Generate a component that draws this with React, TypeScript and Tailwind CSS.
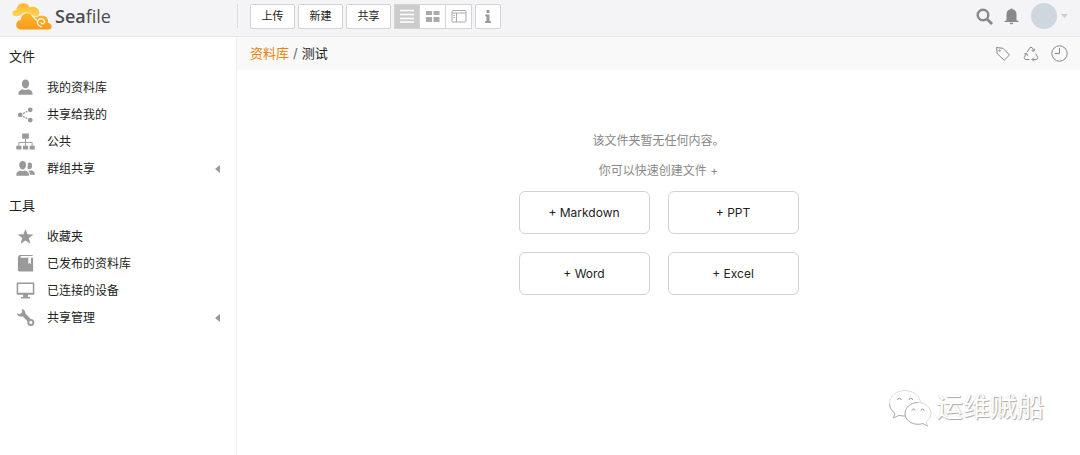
import { useState } from "react"
import type { ReactNode } from "react"
import clsx from "clsx"

interface SideItem {
  label: string
  icon: ReactNode
  expandable?: boolean
}

const fileItems: SideItem[] = [
  {
    label: '我的资料库',
    icon: (
      <>
        <path d="M10 1.500c2.500 0 3.800 1.800 3.800 4.500S12.200 11 10 11 6.200 8.700 6.200 6 7.500 1.500 10 1.500z" />
        <path d="M2.500 17.500c0-3.700 1.500-4.700 4.700-5.600 1.600 1.100 4 1.100 5.600 0 3.200.9 4.700 1.900 4.700 5.600z" />
      </>
    ),
  },
  {
    label: '共享给我的',
    icon: (
      <>
        <circle cx="4.500" cy="10.500" r="2.500" />
        <circle cx="15" cy="5" r="2.500" />
        <circle cx="15" cy="15.800" r="2.500" />
        <path d="M7.500 9l5-2.600M7.500 12l5 2.600" fill="none" stroke="currentColor" strokeWidth="1.400" strokeDasharray="2 1" />
      </>
    ),
  },
  {
    label: '公共',
    icon: (
      <>
        <path d="M6.500 1.500h7v5.500h-7zM.3 14.500h5.400v4H.3zM7.300 14.500h5.400v4H7.300zM14.300 14.500h5.400v4h-5.400z" />
        <path d="M10 7.500v7M3 14.500V11h14v3.500" fill="none" stroke="currentColor" />
      </>
    ),
  },
  {
    label: '群组共享',
    expandable: true,
    icon: (
      <>
        <path d="M7 2c2.300 0 3.600 1.700 3.600 4.200S9 11 7 11 3.400 8.700 3.400 6.200 4.700 2 7 2z" />
        <path d="M.3 17.500c0-3.500 1.500-4.500 4.400-5.300 1.400.9 3.300.9 4.700 0 2.900.8 4.300 1.800 4.300 5.300z" />
        <path d="M14.200 3.800c1.800 0 2.800 1.300 2.800 3.300s-1.200 3.800-2.800 3.800c-1 0-1.800-.5-2.300-1.400.6-1.300.7-3 .3-4.600.4-.7 1.100-1.100 2-1.100z" />
        <path d="M12.600 12c.9.500 2.300.5 3.300-.2 2.700.7 4 1.900 4 4.900h-5.100c-.2-2.300-.9-3.700-2.200-4.700z" />
      </>
    ),
  },
]

const toolItems: SideItem[] = [
  {
    label: '收藏夹',
    icon: <path d="M10 2l2.100 5.700 6.300.2-5 3.700 1.800 6-5.200-3.500-5.200 3.500 1.800-6-5-3.700 6.300-.2z" />,
  },
  {
    label: '已发布的资料库',
    icon: (
      <>
        <path d="M4.500 1H17.500v1H5.500c-1 0-1 1.900 0 1.900h12.500v14.600H4c-1.300 0-2-.6-2-1.800V4C2 2.200 3 1 4.500 1z" />
        <path d="M13 3.900h2.700v6.800l-1.400-1.400L13 10.700z" fill="white" />
      </>
    ),
  },
  {
    label: '已连接的设备',
    icon: (
      <path fillRule="evenodd" d="M1.500 1.500h17c.5 0 .8.300.8.800v11.500c0 .5-.3.800-.8.800h-6v2.200h2.300v1.600H5.200v-1.600h2.300v-2.200h-6c-.5 0-.8-.3-.8-.8V2.300c0-.5.300-.8.8-.8zm.8 1.600v9.300h15.400V3.100z" />
    ),
  },
  {
    label: '共享管理',
    expandable: true,
    icon: (
      <>
        <path d="M5.800 1.200c2.700 0 4.400 2 4.100 4.600l5.400 5.600-3 2.800-5.400-5.400c-2.700.8-5.600-.7-6-3.600l3.200 1.300 2.500-2.200z" />
        <circle cx="15.600" cy="15.200" r="2.700" fill="none" stroke="currentColor" strokeWidth="2" />
      </>
    ),
  },
]

const fileTypes = ['Markdown', 'PPT', 'Word', 'Excel']

const viewModes = [
  {
    id: 'list',
    label: '列表',
    icon: <path d="M1 2.500h14M1 6.500h14M1 10.500h14M1 14h14" stroke="currentColor" strokeWidth="1.300" />,
  },
  {
    id: 'grid',
    label: '网格',
    icon: <path d="M1 3h6v4H1zM8.500 3h6v4h-6zM1 9h6v5H1zM8.500 9h6v5h-6z" fill="currentColor" />,
  },
  {
    id: 'column',
    label: '分栏',
    icon: (
      <>
        <rect x="1" y="2.500" width="14" height="11.500" rx="1" stroke="currentColor" />
        <path d="M1 5h14M5.500 5v9M2.500 7.500h1.500M2.500 9.500h1.500" stroke="currentColor" />
      </>
    ),
  },
]

function Logo() {
  return (
    <a href="#" className="flex items-center gap-[2px] text-[#4d4d4d]" aria-label="Seafile">
      <svg width="41" height="28" viewBox="0 0 41 28" aria-hidden="true">
        <defs>
          <linearGradient id="cloudTop" x1="0" y1="0" x2="0" y2="1">
            <stop offset="0" stopColor="#ffb62c" />
            <stop offset="1" stopColor="#ffd65a" />
          </linearGradient>
          <linearGradient id="cloudBottom" x1="0" y1="0" x2="0" y2="1">
            <stop offset="0" stopColor="#fdb62b" />
            <stop offset="1" stopColor="#fb991c" />
          </linearGradient>
        </defs>
        <path d="M1 13.500C-.8 10 1.200 8 4.500 8.300 4.500 3.500 8 .8 12 1.200c3 .3 4.800 2 5.400 4.100C22.500 3.500 27.500 6.500 27.300 11c-.1 1.500-.5 2.700-1.300 3.700l-6-1.500c-2.300-3.600-8.500-3.900-11-.2-2.500 1.200-5.500 1.600-8 .5z" fill="url(#cloudTop)" />
        <path d="M9.500 27.500c-6.800 0-7-9-.8-9.500.3-4.900 3.800-7.600 7.800-6.700 2.300.5 3.800 1.800 4.700 3.600 1.200-.3 2.600-.1 3.800.8 1.600-2 5-2.800 7.800-1.400 2.600 1.300 3.700 3.800 3.300 6.400 4 .5 5.500 6.800.2 6.800z" fill="url(#cloudBottom)" />
        <path d="M20 13.500c1.800 1.200 2.400 3.300 4.400 4.600M29.300 24.700c-3.600-.8-5-4.300-2.900-6.700 2-2.200 5.900-1.200 6.200 1.500.2 2.200-2.700 3-3.600 1.200" fill="none" stroke="#fff6e0" strokeWidth="1.400" strokeLinecap="round" />
      </svg>
      <span className="font-['Open_Sans',sans-serif] text-lg leading-6">
        <b className="font-semibold">Sea</b>file
      </span>
    </a>
  )
}

function SideGroup({ title, items }: { title: string; items: SideItem[] }) {
  return (
    <section>
      <h3 className="mb-2 px-[9px] text-[13px] leading-5 text-[#222]">{title}</h3>
      <ul>
        {items.map((item) => (
          <li key={item.label}>
            <a href="#" className="flex h-[27px] items-center pr-4 pl-4 text-[#222] hover:bg-gray-50">
              <svg width="19" height="19" viewBox="0 0 20 20" fill="currentColor" className="text-[#999]" aria-hidden="true">
                {item.icon}
              </svg>
              <span className="ml-3 flex-1">{item.label}</span>
              {item.expandable && (
                <svg width="5" height="8" viewBox="0 0 5 8" fill="#999" aria-hidden="true">
                  <path d="M5 0v8L0 4z" />
                </svg>
              )}
            </a>
          </li>
        ))}
      </ul>
    </section>
  )
}

function Header() {
  const [view, setView] = useState('list')
  const buttonClass = 'h-[25px] rounded-[2px] border border-[#d4d4d4] bg-white'

  return (
    <header className="flex h-[37px] items-center border-b border-[#e8e8e8] bg-[#f4f4f7] pb-1">
      <div className="flex h-6 w-[238px] shrink-0 items-center border-r border-[#dcdcdc] pl-3">
        <Logo />
      </div>

      <div className="flex items-center pl-3">
        <div className="flex gap-[3px] text-[11px] text-[#222]">
          {['上传', '新建', '共享'].map((label) => (
            <button key={label} className={clsx(buttonClass, 'w-[45px]')}>{label}</button>
          ))}
        </div>
        <div className="ml-[3px] flex">
          {viewModes.map((mode, i) => (
            <button
              key={mode.id}
              onClick={() => setView(mode.id)}
              aria-label={mode.label}
              aria-pressed={view === mode.id}
              className={clsx(
                'flex h-[25px] w-[26px] items-center justify-center border border-[#d4d4d4]',
                i > 0 && 'border-l-0',
                view === mode.id ? 'bg-[#ccc] text-white' : 'bg-white text-[#aaa]'
              )}
            >
              <svg width="16" height="16" viewBox="0 0 16 16" fill="none" aria-hidden="true">{mode.icon}</svg>
            </button>
          ))}
        </div>
        <button className={clsx(buttonClass, 'ml-[3px] flex w-[26px] items-center justify-center')} aria-label="详情">
          <svg width="6" height="13" viewBox="0 0 6 13" fill="#999" aria-hidden="true">
            <path d="M1.500 0h3v3h-3zM.3 4.500h4.200V11h1.300v2H.2v-2h1.300V6.500H.3z" />
          </svg>
        </button>
      </div>

      <div className="ml-auto flex items-center pr-3 text-[#888]">
        <button aria-label="搜索">
          <svg width="17" height="17" viewBox="0 0 17 17" fill="none" stroke="currentColor" aria-hidden="true">
            <circle cx="7" cy="7" r="5.300" strokeWidth="2.400" />
            <path d="M11 11l5 5" strokeWidth="2.800" />
          </svg>
        </button>
        <button className="ml-[11px]" aria-label="通知">
          <svg width="15" height="17" viewBox="0 0 15 17" fill="currentColor" aria-hidden="true">
            <path d="M6.700.5h1.600v.7c2.900.4 4.200 2.500 4.200 5.300v5.800l2.100 1v.7H.4v-.7l2.100-1V6.500c0-2.800 1.300-4.900 4.200-5.300zM5.700 14.700h3.600c-.2 2-3.400 2-3.600 0z" />
          </svg>
        </button>
        <button className="ml-3 flex items-center gap-1" aria-label="账号">
          <span className="size-[26px] rounded-full bg-[#ced6de]" />
          <svg width="7" height="4" viewBox="0 0 7 4" fill="#ccc" aria-hidden="true">
            <path d="M0 0h7L3.500 4z" />
          </svg>
        </button>
      </div>
    </header>
  )
}

function PathBar() {
  return (
    <div className="flex h-[33px] items-center justify-between bg-[#f9f9fa] pr-3 pl-[13px]">
      <nav className="text-[13px] text-[#222]" aria-label="路径">
        <a href="#" className="text-[#eb8205]">资料库</a>
        <span className="px-1 text-[#666]">/</span>
        <span>测试</span>
      </nav>
      <div className="flex items-center gap-3 text-[#888]">
        <button aria-label="标签">
          <svg width="16" height="16" viewBox="0 0 16 16" fill="none" stroke="currentColor" strokeLinejoin="round" aria-hidden="true">
            <path d="M1.500 1.500l6.500.8 6.500 6.700-5.300 5.300L2.300 7.700z" />
            <circle cx="4.600" cy="4.600" r=".7" />
          </svg>
        </button>
        <button aria-label="回收站">
          <svg width="16" height="16" viewBox="0 0 16 16" fill="none" stroke="currentColor" strokeLinejoin="round" aria-hidden="true">
            <path d="M4.200 6L7 1.500h2l2 3.300M11.500 2.800L11 5.300l-2.400-.7M12.500 7.500l2.300 4-1 2H9.500M11 11.500l-2 2 2 2M6.500 13.500H2.200l-1-2 2.300-4M1.200 8l2.500-.7.900 2.500" />
          </svg>
        </button>
        <button aria-label="历史">
          <svg width="17" height="17" viewBox="0 0 17 17" fill="none" stroke="currentColor" aria-hidden="true">
            <circle cx="8.500" cy="8.500" r="7.700" />
            <path d="M8.500 3v5.500H4" />
          </svg>
        </button>
      </div>
    </div>
  )
}

function Watermark() {
  return (
    <div className="absolute right-9 bottom-7 flex items-center gap-1 text-white">
      <svg width="44" height="38" viewBox="0 0 44 38" fill="white" stroke="#d0d0d0" strokeWidth=".8" aria-hidden="true">
        <path d="M17 1.500C8.500 1.500 1.500 7.300 1.500 14.500c0 4 2.200 7.500 5.500 9.800l-1.500 4.800 5.500-2.800c2 .5 4 .8 6 .8 8.500 0 15.500-5.500 15.500-12.600S25.500 1.500 17 1.500z" />
        <path d="M30 13.500c-7.200 0-13 4.900-13 10.900S22.800 35.300 30 35.300c1.700 0 3.400-.3 4.900-.8l4.800 2.600-1.300-4.200c2.800-2 4.600-5 4.600-8.500 0-6-5.800-10.900-13-10.900z" />
        <path d="M1.500 15c.2 4 2.200 7 5.500 9.300l-1.500 4.800 5.500-2.800c2 .5 4 .8 6.500.8M30 13.500c-7.200 0-13 4.900-13 10.900S22.800 35.300 30 35.300c1.700 0 3.400-.3 4.900-.8l4.800 2.600" fill="none" stroke="#a8a8a8" />
        <path d="M9.500 11a1.800 1.800 0 013.600 0M21 11a1.800 1.800 0 013.600 0M24 21.500a1.500 1.500 0 013 0M33 21.500a1.500 1.500 0 013 0" fill="none" stroke="#999" strokeWidth="1" />
      </svg>
      <span className="text-[27px] leading-9 [text-shadow:1px_1px_1px_#aaa,0_0_1px_#ccc]">运维贼船</span>
    </div>
  )
}

export default function App() {
  return (
    <div className="relative flex min-h-screen flex-col bg-white font-[Inter,'Noto_Sans_CJK_SC',sans-serif] text-xs">
      <Header />
      <div className="flex flex-1">
        <aside className="flex w-[237px] shrink-0 flex-col gap-[13px] border-r border-[#eee] pt-[9px]">
          <SideGroup title="文件" items={fileItems} />
          <SideGroup title="工具" items={toolItems} />
        </aside>

        <main className="min-w-0 flex-1">
          <PathBar />
          <div className="flex flex-col items-center pt-[61px]">
            <p className="mb-[10px] leading-5 text-[#888]">该文件夹暂无任何内容。</p>
            <p className="mb-[10px] leading-5 text-[#888]">你可以快速创建文件 +</p>
            <div className="grid grid-cols-2 gap-[18px]">
              {fileTypes.map((type) => (
                <button key={type} className="h-[43px] w-[131px] rounded-md border border-[#d2d2d2] text-[#222] hover:bg-gray-50">
                  + {type}
                </button>
              ))}
            </div>
          </div>
        </main>
      </div>
      <Watermark />
    </div>
  )
}
